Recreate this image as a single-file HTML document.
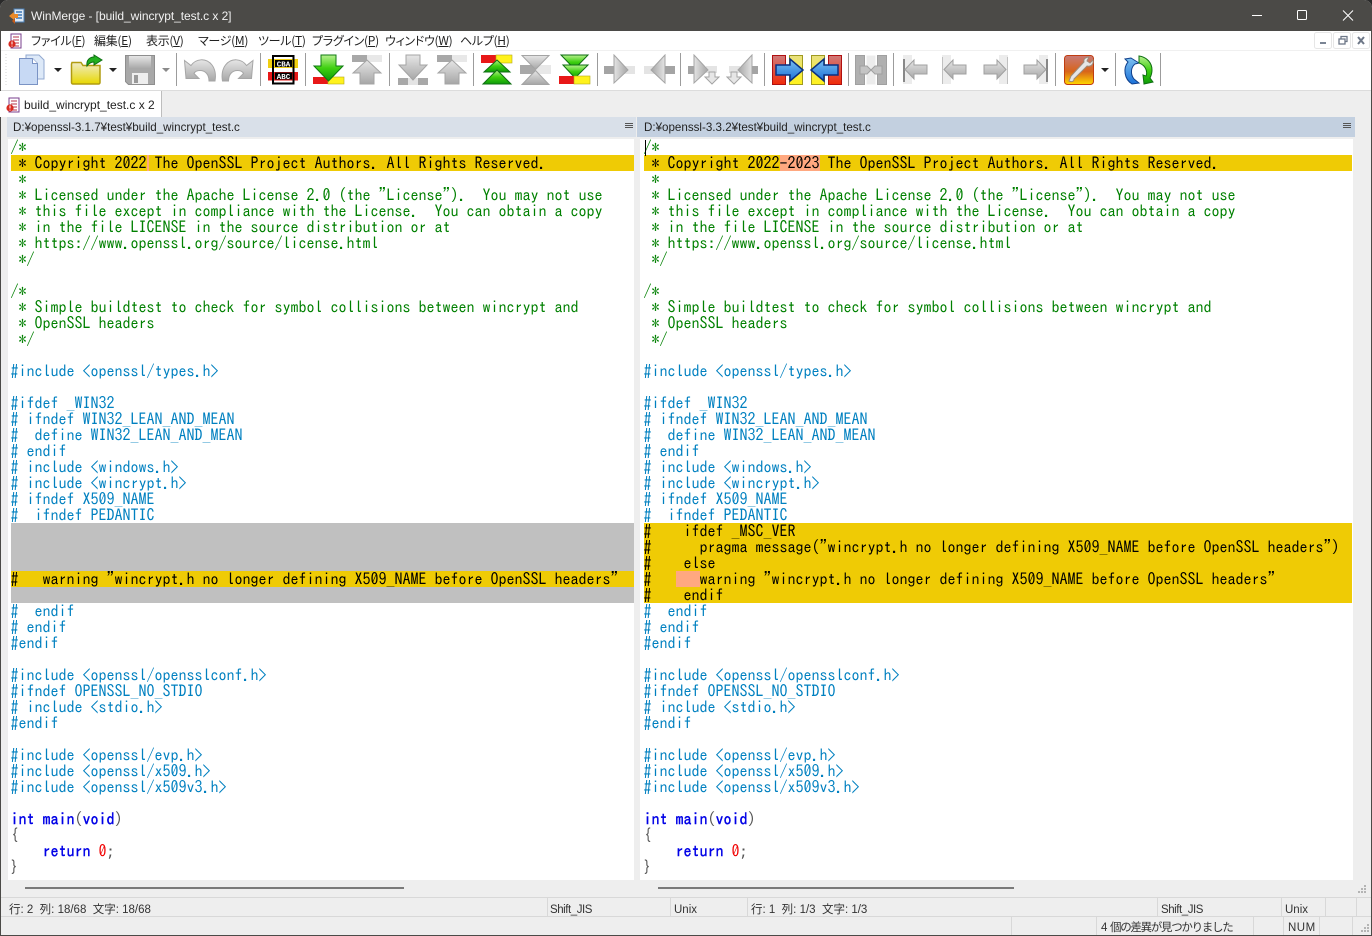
<!DOCTYPE html>
<html><head><meta charset="utf-8"><title>WinMerge</title>
<style>
*{box-sizing:border-box}
html,body{margin:0;padding:0;width:1372px;height:936px;overflow:hidden;background:#2a2a2a}
#w{position:absolute;left:0;top:0;width:1372px;height:936px;background:#eeeeee;border-radius:8px 8px 0 0;overflow:hidden;font-family:"Liberation Sans","Noto Sans CJK JP",sans-serif;color:#222}
.a{position:absolute;white-space:pre}
.b{position:absolute}
.m{font:12px/16px "Noto Sans CJK JP",sans-serif;font-feature-settings:"palt";top:33px;letter-spacing:-.3px;color:#222}
.m u{text-underline-offset:1px}
.code{position:absolute;top:139px;margin:0;font:16px/16px "IPAGothic","Liberation Mono",monospace;white-space:pre;color:#000;z-index:3}
.g{color:#008000}.p{color:#0080c0}.k{color:#0000e6;-webkit-text-stroke:.4px #0000e6}.n{color:#f00000}.o{color:#555}.t{color:#222}
.ink{color:#000}
.s{font:11.5px/16px "Liberation Sans","Noto Sans CJK JP",sans-serif;color:#333}
.hl{position:absolute;background:#efcb05;height:16px}
.sep{position:absolute;width:1px;background:#d8d8d8}
.hd{font:11.6px/20px "Liberation Sans",sans-serif;color:#222;top:118px}
</style></head><body><div id="w">

<!-- window frame -->
<div class="b" style="left:0;top:0;width:1372px;height:31px;background:#4b4a47"></div>
<div class="b" style="left:0;top:31px;width:1372px;height:59px;background:#fff"></div>
<div class="b" style="left:0;top:50px;width:1372px;height:1px;background:#f0f0f0"></div>
<div class="b" style="left:0;top:90px;width:1372px;height:1px;background:#dcdcdc"></div>
<div class="b" style="left:0;top:31px;width:1px;height:905px;background:#4b4a47"></div>
<div class="b" style="left:1371px;top:31px;width:1px;height:905px;background:#4b4a47"></div>
<div class="b" style="left:0;top:935px;width:1372px;height:1px;background:#4b4a47;z-index:9"></div>

<!-- title bar -->
<svg class="b" style="left:9px;top:8px" width="16" height="16" viewBox="0 0 16 16"><path d="M5 1h10v13H5z" fill="#dfeaf5" stroke="#4a7fb5"/><path d="M7 4h6M7 7h6M7 10h6" stroke="#3c78b8" stroke-width="1.4"/><path d="M0 8l5-4v2h4v4H5v2z" fill="#e8892a"/><path d="M3 13l3-3v6z" fill="#c35a1a"/></svg>
<div class="a" style="left:31px;top:8px;font-size:12px;line-height:16px;color:#f2f2f2;letter-spacing:-.06px">WinMerge - [build_wincrypt_test.c x 2]</div>
<svg class="b" style="left:1240px;top:0" width="132" height="31" viewBox="0 0 132 31" fill="none" stroke="#fff" stroke-width="1"><path d="M12 15.500h10"/><rect x="57.500" y="10.500" width="9" height="9" rx="1"/><path d="M103 10.500l10 10M113 10.500l-10 10"/></svg>

<!-- menu bar -->
<svg class="b" style="left:8px;top:33px" width="15" height="16" viewBox="0 0 15 16"><path d="M3 1h10v14H3z" fill="#fff" stroke="#7a3f8c"/><path d="M5 4h6M5 7h6M5 10h6M5 13h6" stroke="#b5304a"/><circle cx="4" cy="11" r="3.600" fill="#d82a20"/><path d="M4 8.500v3M4 12.600v1" stroke="#fff"/></svg>
<div class="a m" style="left:31px">ファイル(<u>F</u>)</div>
<div class="a m" style="left:94px">編集(<u>E</u>)</div>
<div class="a m" style="left:146px">表示(<u>V</u>)</div>
<div class="a m" style="left:198px">マージ(<u>M</u>)</div>
<div class="a m" style="left:258px">ツール(<u>T</u>)</div>
<div class="a m" style="left:312px">プラグイン(<u>P</u>)</div>
<div class="a m" style="left:385px">ウィンドウ(<u>W</u>)</div>
<div class="a m" style="left:460px">ヘルプ(<u>H</u>)</div>
<svg class="b" style="left:1314px;top:32px" width="56" height="17" viewBox="0 0 56 17"><g fill="#fff" stroke="#e6e6e6"><rect x=".5" y=".5" width="17" height="16" rx="2"/><rect x="19.500" y=".5" width="17" height="16" rx="2"/><rect x="38.500" y=".5" width="17" height="16" rx="2"/></g><path d="M6 11h6" stroke="#7a8494" stroke-width="2"/><g fill="none" stroke="#6d7787" stroke-width="1.300"><rect x="25" y="7" width="6" height="5"/><path d="M27 7V4.500h6v5h-2"/></g><path d="M44 5l6 7M50 5l-6 7" stroke="#6d7787" stroke-width="2"/></svg>

<!-- toolbar -->
<svg class="b" style="left:0;top:50px;z-index:2" width="1372" height="40" viewBox="0 50 1372 40">
<defs>
<linearGradient id="gr" x1="0" y1="0" x2="0" y2="1"><stop offset="0" stop-color="#e6e6e6"/><stop offset="1" stop-color="#a6a6a6"/></linearGradient>
<linearGradient id="gh" x1="0" y1="0" x2="1" y2="0"><stop offset="0" stop-color="#e4e4e4"/><stop offset="1" stop-color="#a4a4a4"/></linearGradient>
<linearGradient id="gv" x1="0" y1="0" x2="0" y2="1"><stop offset="0" stop-color="#b8f090"/><stop offset=".5" stop-color="#3fd010"/><stop offset="1" stop-color="#0c9a08"/></linearGradient>
<linearGradient id="yl" x1="0" y1="0" x2="0" y2="1"><stop offset="0" stop-color="#e8e080"/><stop offset="1" stop-color="#fff21c"/></linearGradient>
<linearGradient id="rd" x1="0" y1="0" x2="0" y2="1"><stop offset="0" stop-color="#cf7a7a"/><stop offset="1" stop-color="#f02a08"/></linearGradient>
<linearGradient id="bl" x1="0" y1="0" x2="0" y2="1"><stop offset="0" stop-color="#7cc0f0"/><stop offset="1" stop-color="#1a70d8"/></linearGradient>
<linearGradient id="fo" x1="0" y1="0" x2="0" y2="1"><stop offset="0" stop-color="#f0ecc8"/><stop offset="1" stop-color="#e8d800"/></linearGradient>
<linearGradient id="wr" x1="0" y1="0" x2="0" y2="1"><stop offset="0" stop-color="#c87a78"/><stop offset=".55" stop-color="#d8641a"/><stop offset="1" stop-color="#ffd800"/></linearGradient>
<symbol id="gup" viewBox="0 0 32 32" width="32" height="32"><rect x="1" y="1" width="15" height="7" fill="#a8a8a8"/><rect x="16" y="1" width="15" height="7" fill="#e8e8e8"/><path d="M16 6L30 19H23V30H9V19H2z" fill="url(#gr)" stroke="#a4a4a4"/></symbol>
<symbol id="gdn" viewBox="0 0 32 32" width="32" height="32"><rect x="1" y="24" width="10" height="7" fill="#a8a8a8"/><rect x="11" y="24" width="10" height="7" fill="#e4e4e4"/><rect x="21" y="24" width="10" height="7" fill="#a8a8a8"/><path d="M9 1H23V11H30L16 26 2 11H9z" fill="url(#gr)" stroke="#a4a4a4"/></symbol>
<symbol id="gr1" viewBox="0 0 32 32" width="32" height="32"><rect x="0" y="12" width="12" height="8" fill="#a4a4a4"/><rect x="20" y="12" width="11" height="8" fill="#e4e4e4"/><path d="M10 1L24 16 10 29z" fill="url(#gh)" stroke="#a4a4a4"/></symbol>
<symbol id="gr2" viewBox="0 0 32 32" width="32" height="32"><rect x="0" y="12" width="10" height="8" fill="#a4a4a4"/><rect x="18" y="12" width="11" height="7" fill="#e4e4e4"/><path d="M6 1L20 16 6 29z" fill="url(#gh)" stroke="#a4a4a4"/><path d="M21 18h6v5h4l-7 7-7-7h4z" fill="#e6e6e6" stroke="#a4a4a4"/></symbol>
<symbol id="gl" viewBox="0 0 26 32" width="26" height="32"><rect x="0" y="1" width="9" height="29" fill="#ececec"/><rect x="0" y="5" width="2" height="23" fill="#888"/><path d="M2 15.500L11 6V11H24V20H11V25z" fill="url(#gr)" stroke="#a0a0a0"/></symbol>
<symbol id="gl2" viewBox="0 0 26 32" width="26" height="32"><rect x="0" y="1" width="9" height="29" fill="#ececec"/><rect x="0" y="3" width="1" height="27" fill="#c0c0c0"/><path d="M2 15.500L11 6V11H24V20H11V25z" fill="url(#gr)" stroke="#a0a0a0"/></symbol>
</defs>

<g fill="none" stroke="#d6d6d6"><path d="M6 54v32" stroke-dasharray="1 2"/></g>
<g fill="#9c9c9c"><rect x="176" y="53" width="1" height="33"/><rect x="260" y="53" width="1" height="33"/><rect x="305" y="53" width="1" height="33"/><rect x="389" y="53" width="1" height="33"/><rect x="473" y="53" width="1" height="33"/><rect x="597" y="53" width="1" height="33"/><rect x="680" y="53" width="1" height="33"/><rect x="764" y="53" width="1" height="33"/><rect x="848" y="53" width="1" height="33"/><rect x="893" y="53" width="1" height="33"/><rect x="1055" y="53" width="1" height="33"/><rect x="1115" y="53" width="1" height="33"/><rect x="1160" y="53" width="1" height="33"/></g>

<!-- new -->
<path d="M26 55h13l5 5v19H26z" fill="#dde9f8" stroke="#92a9d0"/><path d="M19.500 58.500h13l5 5v21h-18z" fill="#c7d9f4" stroke="#7a93c4"/><path d="M32.500 58.500v5h5" fill="#fff" stroke="#7a93c4"/>
<path d="M54 68h8l-4 4z" fill="#222"/>
<!-- open -->
<path d="M72 62.500h9l2 3h17v17a1.500 1.500 0 0 1-1.500 1.500H73a1.500 1.500 0 0 1-1.500-1.500V64z" fill="url(#fo)" stroke="#b09c10" stroke-width="1.500"/>
<path d="M87 66c-1-6 3-9 7-9v-2l8 5-8 5v-3c-3 0-5 1-7 4z" fill="#22b020" stroke="#0e6e12"/>
<path d="M109 68h8l-4 4z" fill="#222"/>
<!-- save -->
<path d="M125.500 55.500h29v29h-26l-3-3z" fill="#a8a8a8" stroke="#8e8e8e"/><rect x="129" y="56" width="22" height="13" fill="url(#gr)"/><rect x="132" y="73" width="16" height="11" fill="#eee"/><rect x="134" y="75" width="4" height="8" fill="#999"/>
<path d="M162 68h8l-4 4z" fill="#8a8a8a"/>
<!-- undo redo -->
<path id="un" d="M184.500 60.500L191 65.500C196 58.500 206 57.500 212 65C215 69 216 75 215 81H209C209 74 205 70.500 200 70.500C197 70.500 195 71.500 194 73.500L199 78.500H186z" fill="url(#gr)" stroke="#a6a6a6"/>
<path d="M184.500 60.500L191 65.500C196 58.500 206 57.500 212 65C215 69 216 75 215 81H209C209 74 205 70.500 200 70.500C197 70.500 195 71.500 194 73.500L199 78.500H186z" transform="translate(437.500,0) scale(-1,1)" fill="url(#gr)" stroke="#a6a6a6"/>
<!-- compare cba -->
<rect x="268" y="59" width="30" height="9" fill="#f0cf10"/><rect x="268" y="72" width="30" height="8.500" fill="#e81818"/>
<rect x="273" y="56" width="20.500" height="27.500" fill="none" stroke="#000" stroke-width="2"/>
<rect x="275" y="60" width="17" height="7" fill="#000"/><rect x="275" y="72.500" width="17" height="7" fill="#000"/>
<text x="283.500" y="66.500" text-anchor="middle" font-family="Liberation Mono" font-weight="bold" font-size="7.500" fill="#fff">CBA</text>
<text x="283.500" y="79" text-anchor="middle" font-family="Liberation Mono" font-weight="bold" font-size="7.500" fill="#fff">ABC</text>
<!-- first diff down -->
<rect x="313" y="77" width="15" height="7" fill="#e81818"/><rect x="328" y="77" width="16" height="7" fill="#fff21c" stroke="#b5a818" stroke-width=".6"/><path d="M321 55h15v11h7l-14.500 15L314 66h7z" fill="url(#gv)" stroke="#0e7a10"/>
<use href="#gup" x="351" y="54"/><use href="#gdn" x="397" y="54"/><use href="#gup" x="436" y="54"/>
<!-- double up -->
<rect x="481" y="55" width="15" height="8" fill="#e81818"/><rect x="496" y="55" width="16" height="8" fill="#fff21c" stroke="#b5a818" stroke-width=".6"/>
<path d="M497 60l13 12h-26z" fill="url(#gv)" stroke="#0e6e12"/><path d="M497 70l14 14h-28z" fill="url(#gv)" stroke="#0e6e12"/>
<!-- mid grey -->
<g><rect x="520" y="65" width="15" height="9" fill="#a8a8a8"/><rect x="535" y="65" width="16" height="9" fill="#e8e8e8"/><path d="M522 55.500h27l-13.500 14z" fill="url(#gr)" stroke="#a4a4a4"/><path d="M522 84.500h27l-13.500-14z" fill="url(#gr)" stroke="#a4a4a4"/></g>
<!-- double down -->
<path d="M561 55h27l-13.500 14z" fill="url(#gv)" stroke="#0e6e12"/><path d="M563 65h25l-13 13z" fill="url(#gv)" stroke="#0e6e12"/>
<rect x="559" y="76" width="15" height="8" fill="#e81818"/><rect x="574" y="76" width="16" height="8" fill="#fff21c" stroke="#b5a818" stroke-width=".6"/>
<use href="#gr1" x="604" y="54"/><use href="#gr1" x="-675" y="54" transform="scale(-1,1)"/>
<use href="#gr2" x="688" y="54"/><use href="#gr2" x="-758" y="54" transform="scale(-1,1)"/>
<!-- copy right -->
<rect x="772.500" y="55.500" width="13" height="29" fill="url(#rd)" stroke="#b01010"/><rect x="789.500" y="55.500" width="13" height="29" fill="url(#yl)" stroke="#a09a20"/><path d="M776 65h14v-6l13 11-13 11v-6h-14z" fill="url(#bl)" stroke="#0a2f80" stroke-width="1.500"/>
<!-- copy left -->
<rect x="811.500" y="55.500" width="13" height="29" fill="url(#yl)" stroke="#a09a20"/><rect x="828.500" y="55.500" width="13" height="29" fill="url(#rd)" stroke="#b01010"/><path d="M838 65h-14v-6l-13 11 13 11v-6h14z" fill="url(#bl)" stroke="#0a2f80" stroke-width="1.500"/>
<!-- all -->
<rect x="855.500" y="55.500" width="9" height="29" fill="#b0b0b0" stroke="#a0a0a0"/><rect x="866.500" y="55.500" width="9" height="29" fill="#ececec"/><rect x="877.500" y="55.500" width="9" height="29" fill="#b0b0b0" stroke="#a0a0a0"/><path d="M860 66h7l4 4 4-4h7v8h-7l-4-4-4 4h-7z" fill="#c4c4c4" stroke="#a0a0a0"/>
<use href="#gl" x="903" y="54"/><use href="#gl2" x="942" y="54"/>
<use href="#gl2" x="-1008" y="54" transform="scale(-1,1)"/><use href="#gl" x="-1048" y="54" transform="scale(-1,1)"/>
<!-- options wrench -->
<rect x="1064.500" y="55.500" width="29" height="29" rx="3" fill="url(#wr)" stroke="#c03c10"/>
<path d="M1069 81l2-5 13-14c-1-3 2-5 5-5l-2 4 3 2 3-3c1 4-2 7-6 6l-13 13c0 3-3 3-5 2z" fill="#e6e6e6" stroke="#9c8a78"/>
<path d="M1101 68h8l-4 4z" fill="#222"/>
<!-- refresh -->
<path d="M1131 58l8 5-4 1c-4 3-5 10-1 15l5 4-7 1c-8-5-9-16-4-22l-3-3z" fill="url(#bl)" stroke="#10408c"/>
<path d="M1139 56c8 1 13 7 13 14 0 4-1 6-2 8l3 4-9 2-1-9 3 1c2-5-1-11-7-13z" fill="url(#gv)" stroke="#0e6e12"/>
</svg>

<!-- tab -->
<div class="b" style="left:0;top:91px;width:162px;height:26px;background:#fff;border-right:1px solid #bdbdbd"></div>
<svg class="b" style="left:6px;top:97px" width="15" height="16" viewBox="0 0 15 16"><path d="M3 1h10v14H3z" fill="#fff" stroke="#7a3f8c"/><path d="M5 4h6M5 7h6M5 10h6M5 13h6" stroke="#b5304a"/><circle cx="4" cy="11" r="3.600" fill="#d82a20"/><path d="M4 8.500v3M4 12.600v1" stroke="#fff"/></svg>
<div class="a" style="left:24px;top:97px;font-size:12px;line-height:16px;color:#222">build_wincrypt_test.c x 2</div>

<!-- pane headers -->
<div class="b" style="left:7px;top:117px;width:629px;height:20px;background:#d9e0e9"></div>
<div class="b" style="left:637px;top:117px;width:718px;height:20px;background:#c3d0e0"></div>
<div class="a hd" style="left:13px">D:¥openssl-3.1.7¥test¥build_wincrypt_test.c</div>
<div class="a hd" style="left:644px">D:¥openssl-3.3.2¥test¥build_wincrypt_test.c</div>
<svg class="b" style="left:625px;top:123px" width="8" height="6"><path d="M0 .5h8M0 2.500h8M0 4.500h8" stroke="#555"/></svg>
<svg class="b" style="left:1343px;top:123px" width="8" height="6"><path d="M0 .5h8M0 2.500h8M0 4.500h8" stroke="#555"/></svg>

<!-- panes -->
<div class="b" style="left:8px;top:139px;width:626px;height:741px;background:#fff"></div>
<div class="b" style="left:640px;top:139px;width:713px;height:741px;background:#fff"></div>

<!-- diff highlights -->
<div class="hl" style="left:11px;top:155px;width:623px"></div>
<div class="b" style="left:147px;top:155px;width:2px;height:16px;background:#ffa880;z-index:1"></div>
<div class="b" style="left:11px;top:523px;width:623px;height:80px;background:#c0c0c0"></div>
<div class="hl" style="left:11px;top:571px;width:623px"></div>
<div class="hl" style="left:644px;top:155px;width:708px"></div>
<div class="b" style="left:780px;top:155px;width:40px;height:16px;background:#ffa880;z-index:1"></div>
<div class="hl" style="left:644px;top:523px;width:708px;height:80px"></div>
<div class="b" style="left:676px;top:571px;width:24px;height:16px;background:#ffa880;z-index:1"></div>
<div class="b" style="left:645px;top:140px;width:1px;height:16px;background:#000;z-index:4"></div>

<pre class="code" style="left:10.500px"><span class="g">/*</span>
<span class="ink"> * Copyright 2022 The OpenSSL Project Authors. All Rights Reserved.</span>
<span class="g"> *
 * Licensed under the Apache License 2.0 (the "License").  You may not use
 * this file except in compliance with the License.  You can obtain a copy
 * in the file LICENSE in the source distribution or at
 * https://www.openssl.org/source/license.html
 */

/*
 * Simple buildtest to check for symbol collisions between wincrypt and
 * OpenSSL headers
 */</span>

<span class="p">#include &lt;openssl/types.h&gt;

#ifdef _WIN32
# ifndef WIN32_LEAN_AND_MEAN
#  define WIN32_LEAN_AND_MEAN
# endif
# include &lt;windows.h&gt;
# include &lt;wincrypt.h&gt;
# ifndef X509_NAME
#  ifndef PEDANTIC</span>



<span class="ink">#   warning "wincrypt.h no longer defining X509_NAME before OpenSSL headers"</span>

<span class="p">#  endif
# endif
#endif

#include &lt;openssl/opensslconf.h&gt;
#ifndef OPENSSL_NO_STDIO
# include &lt;stdio.h&gt;
#endif

#include &lt;openssl/evp.h&gt;
#include &lt;openssl/x509.h&gt;
#include &lt;openssl/x509v3.h&gt;</span>

<span class="k">int main</span><span class="o">(</span><span class="k">void</span><span class="o">)</span>
<span class="o">{</span>
    <span class="k">return</span> <span class="n">0</span><span class="o">;</span>
<span class="o">}</span></pre>

<pre class="code" style="left:643.500px"><span class="g">/*</span>
<span class="ink"> * Copyright 2022-2023 The OpenSSL Project Authors. All Rights Reserved.</span>
<span class="g"> *
 * Licensed under the Apache License 2.0 (the "License").  You may not use
 * this file except in compliance with the License.  You can obtain a copy
 * in the file LICENSE in the source distribution or at
 * https://www.openssl.org/source/license.html
 */

/*
 * Simple buildtest to check for symbol collisions between wincrypt and
 * OpenSSL headers
 */</span>

<span class="p">#include &lt;openssl/types.h&gt;

#ifdef _WIN32
# ifndef WIN32_LEAN_AND_MEAN
#  define WIN32_LEAN_AND_MEAN
# endif
# include &lt;windows.h&gt;
# include &lt;wincrypt.h&gt;
# ifndef X509_NAME
#  ifndef PEDANTIC</span>
<span class="ink">#    ifdef _MSC_VER
#      pragma message("wincrypt.h no longer defining X509_NAME before OpenSSL headers")
#    else
#      warning "wincrypt.h no longer defining X509_NAME before OpenSSL headers"
#    endif</span>
<span class="p">#  endif
# endif
#endif

#include &lt;openssl/opensslconf.h&gt;
#ifndef OPENSSL_NO_STDIO
# include &lt;stdio.h&gt;
#endif

#include &lt;openssl/evp.h&gt;
#include &lt;openssl/x509.h&gt;
#include &lt;openssl/x509v3.h&gt;</span>

<span class="k">int main</span><span class="o">(</span><span class="k">void</span><span class="o">)</span>
<span class="o">{</span>
    <span class="k">return</span> <span class="n">0</span><span class="o">;</span>
<span class="o">}</span></pre>

<!-- scrollbars -->
<div class="b" style="left:25px;top:887px;width:379px;height:2px;background:#7a7a7a"></div>
<div class="b" style="left:658px;top:887px;width:356px;height:2px;background:#7a7a7a"></div>
<svg class="b" style="left:1358px;top:885px" width="10" height="10"><g fill="#b4b4b4"><rect x="6" y="0" width="2" height="2"/><rect x="3" y="3" width="2" height="2"/><rect x="6" y="3" width="2" height="2"/><rect x="0" y="6" width="2" height="2"/><rect x="3" y="6" width="2" height="2"/><rect x="6" y="6" width="2" height="2"/></g></svg>

<!-- status bars -->
<div class="b" style="left:1px;top:897px;width:1370px;height:1px;background:#d8d8d8"></div>
<div class="b" style="left:1px;top:916px;width:1370px;height:1px;background:#d8d8d8"></div>
<div class="sep" style="left:547px;top:898px;height:18px"></div>
<div class="sep" style="left:670px;top:898px;height:18px"></div>
<div class="sep" style="left:747px;top:898px;height:18px"></div>
<div class="sep" style="left:1157px;top:898px;height:18px"></div>
<div class="sep" style="left:1281px;top:898px;height:18px"></div>
<div class="sep" style="left:1325px;top:898px;height:18px"></div>
<div class="sep" style="left:1356px;top:898px;height:18px"></div>
<div class="sep" style="left:1011px;top:917px;height:18px"></div>
<div class="sep" style="left:1096px;top:917px;height:18px"></div>
<div class="sep" style="left:1253px;top:917px;height:18px"></div>
<div class="sep" style="left:1283px;top:917px;height:18px"></div>
<div class="sep" style="left:1319px;top:917px;height:18px"></div>
<div class="sep" style="left:1352px;top:917px;height:18px"></div>
<div class="a s" style="left:9px;top:902px">行: 2  列: 18/68  文字: 18/68</div>
<div class="a s" style="left:550px;top:902px;letter-spacing:-.45px">Shift_JIS</div>
<div class="a s" style="left:674px;top:902px">Unix</div>
<div class="a s" style="left:751px;top:902px">行: 1  列: 1/3  文字: 1/3</div>
<div class="a s" style="left:1161px;top:902px;letter-spacing:-.45px">Shift_JIS</div>
<div class="a s" style="left:1285px;top:902px">Unix</div>
<div class="a s" style="left:1101px;top:920px;letter-spacing:-1.3px;word-spacing:2px">4 個の差異が見つかりました</div>
<div class="a s" style="left:1288px;top:920px;letter-spacing:.5px">NUM</div>
<svg class="b" style="left:1361px;top:924px" width="10" height="10"><g fill="#b4b4b4"><rect x="6" y="0" width="2" height="2"/><rect x="3" y="3" width="2" height="2"/><rect x="6" y="3" width="2" height="2"/><rect x="0" y="6" width="2" height="2"/><rect x="3" y="6" width="2" height="2"/><rect x="6" y="6" width="2" height="2"/></g></svg>
</div></body></html>
